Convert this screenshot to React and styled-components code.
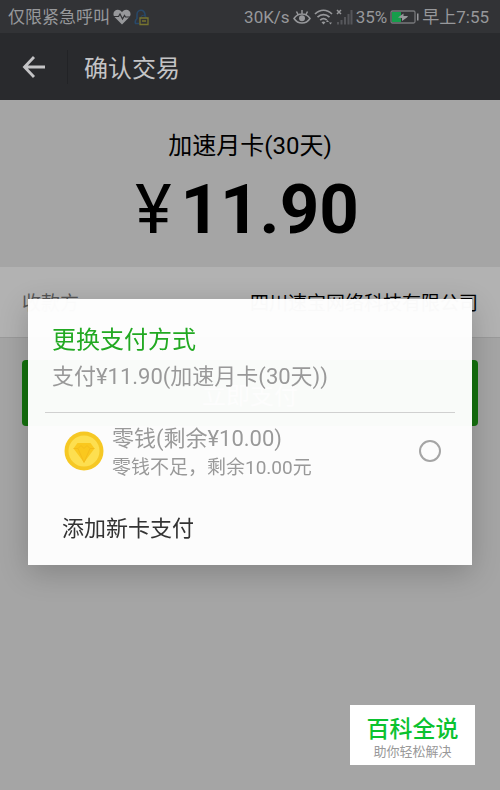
import React, { useState } from "react";
import styled, { createGlobalStyle } from "styled-components";

const GlobalStyle = createGlobalStyle`
    * {
        box-sizing: border-box;
    }
    body {
        margin: 0;
        background: #a5a5a5;
        color: #000;
        font-family: Roboto, "Noto Sans CJK SC", sans-serif;
    }
    h1, h2, p, dl, dt, dd {
        margin: 0;
        font-weight: 400;
    }
    button {
        border: 0;
        padding: 0;
        background: none;
        font-family: inherit;
        cursor: pointer;
    }
`;

// icons
const HeartIcon = () => (
    <svg width="18" height="16" viewBox="0 0 18 16">
        <path
            d="M9 15.500 2 8.500C-1.200 5 1 .8 4.800.8 6.700.8 8.200 1.800 9 3.300 9.800 1.800 11.300.8 13.200.8 17 .8 19.200 5 16 8.500Z"
            fill="#97989b"
        />
        <path
            d="M1 7.500h4.500L7 5l2.500 5L11.500 6.500l1 1.500H17"
            fill="none"
            stroke="#323336"
            strokeWidth="1.200"
        />
    </svg>
);

const PersonLockIcon = () => (
    <svg width="16" height="17" viewBox="0 0 16 17" fill="none">
        <path
            d="M5 14.500H1.500c-.6-1.500 0-3.500 1.500-5V6a4 4.500 0 0 1 8-.5v2"
            stroke="#28496a"
            strokeWidth="1.600"
        />
        <path d="M7 9V7.500a3 2.500 0 0 1 5 0V9" stroke="#28496a" />
        <path d="M6 9h8v6.500H6ZM8 12h4" stroke="#77742f" strokeWidth="1.300" />
    </svg>
);

const EyeIcon = () => (
    <svg width="18" height="16" viewBox="0 0 18 16" fill="none">
        <path
            d="M1 9.500c4-6 12-6 16 0-4 6-12 6-16 0ZM9 1v3.500M3.500 2.500 5 5.500M14.500 2.500 13 5.500"
            stroke="#97989b"
            strokeWidth="1.500"
        />
        <circle cx="9" cy="9.300" r="3" fill="#97989b" />
    </svg>
);

const WifiIcon = () => (
    <svg width="19" height="16" viewBox="0 0 19 16" fill="none">
        <path
            d="M1 5c5-5 12-5 17 0M3.500 8.200c3.500-3.500 8.500-3.500 12 0M6.200 11.200c2-2 4.600-2 6.600 0"
            stroke="#97989b"
            strokeWidth="1.700"
        />
        <path
            d="m9.500 15.500-2-2.300c1.200-1 2.800-1 4 0ZM12 13l1.500-2 1.500 2ZM15 13.500h3L16.500 15.500Z"
            fill="#97989b"
        />
    </svg>
);

const SignalIcon = () => (
    <svg width="17" height="16" viewBox="0 0 17 16">
        <path d="m1 1 4 4M5 1 1 5" stroke="#97989b" strokeWidth="1.500" />
        <path
            d="M2 13v2.500M5.500 11v4.500M9 8v7.500M12.500 5v10.500M15.500 1v14.500"
            stroke="#55565a"
            strokeWidth="2"
        />
    </svg>
);

const BatteryIcon = () => (
    <svg width="29" height="14" viewBox="0 0 29 14">
        <rect
            x="1"
            y="1"
            width="24"
            height="12"
            rx="1.500"
            fill="none"
            stroke="#77787b"
            strokeWidth="1.300"
        />
        <path d="M27 3.500h1.500v7H27Z" fill="#97989b" />
        <path d="M2 2h9v10H2Z" fill="#169d4b" />
        <path d="m8 7.500 5.500-4v2.500H18l-1 1.500-5 3.500V8Z" fill="#97989b" />
    </svg>
);

const BackIcon = () => (
    <svg width="24" height="24" viewBox="0 0 24 24" fill="none">
        <path
            d="M12 2 2.500 12 12 22M2.500 12H23"
            stroke="#c4c4c6"
            strokeWidth="2.800"
        />
    </svg>
);

const CoinIcon = () => (
    <svg width="40" height="40" viewBox="0 0 40 40">
        <circle cx="20" cy="20" r="19.500" fill="#f6c824" />
        <circle cx="20" cy="20" r="15.500" fill="#fddf50" />
        <path d="M13.500 12h13l4 5.500L20 31.500 9.500 17.500Z" fill="#fac81e" />
        <path
            d="M9.500 17.500h4.500l3-3 3 3 3-3 3 3h4.500M14 17.500l6 14 6-14"
            fill="none"
            stroke="#f3b91a"
            strokeWidth=".8"
        />
    </svg>
);

const App = () => {
    const [method, setMethod] = useState("");

    return (
        <>
            <GlobalStyle />
            <StatusBar>
                <StatusGroup>
                    <span>仅限紧急呼叫</span>
                    <HeartIcon />
                    <PersonLockIcon />
                </StatusGroup>
                <StatusGroup>
                    <span>30K/s</span>
                    <EyeIcon />
                    <WifiIcon />
                    <SignalIcon />
                    <span>35%</span>
                    <BatteryIcon />
                    <span>早上7:55</span>
                </StatusGroup>
            </StatusBar>
            <Header>
                <BackButton aria-label="返回">
                    <BackIcon />
                </BackButton>
                <HeaderTitle>确认交易</HeaderTitle>
            </Header>
            <main>
                <Summary>
                    <p>加速月卡(30天)</p>
                    <Amount>
                        <Currency>¥</Currency>11.90
                    </Amount>
                </Summary>
                <Payee>
                    <dt>收款方</dt>
                    <dd>四川速宝网络科技有限公司</dd>
                </Payee>
                <PayButton>立即支付</PayButton>
            </main>
            <Overlay>
                <Dialog role="dialog" aria-labelledby="dialog-title">
                    <DialogTitle id="dialog-title">更换支付方式</DialogTitle>
                    <DialogText>支付¥11.90(加速月卡(30天))</DialogText>
                    <Method>
                        <CoinIcon />
                        <MethodText>
                            <MethodName>零钱(剩余¥10.00)</MethodName>
                            <MethodHint>零钱不足，剩余10.00元</MethodHint>
                        </MethodText>
                        <Radio
                            type="radio"
                            name="method"
                            value="balance"
                            checked={method === "balance"}
                            onChange={e => setMethod(e.target.value)}
                        />
                    </Method>
                    <AddCard>添加新卡支付</AddCard>
                </Dialog>
            </Overlay>
            <Badge>
                <BadgeTitle>百科全说</BadgeTitle>
                <BadgeText>助你轻松解决</BadgeText>
            </Badge>
        </>
    );
};

const StatusBar = styled.div`
    display: flex;
    justify-content: space-between;
    align-items: center;
    height: 33px;
    padding: 1px 11px 0 8px;
    background: #323336;
    color: #97989b;
    font-size: 17px;
    line-height: 24px;
    white-space: nowrap;
`;

const StatusGroup = styled.div`
    display: flex;
    align-items: center;
    gap: 3px;
`;

const Header = styled.header`
    display: flex;
    align-items: center;
    height: 67px;
    background: #292a2d;
`;

const BackButton = styled.button`
    display: flex;
    justify-content: center;
    align-items: center;
    width: 68px;
    height: 34px;
    border-right: 1px solid #222326;
`;

const HeaderTitle = styled.h1`
    padding: 4px 0 0 16px;
    color: #c4c4c6;
    font-size: 24px;
    line-height: 32px;
`;

const Summary = styled.section`
    padding: 30px 0 14px;
    text-align: center;
    font-size: 24px;
    line-height: 32px;
`;

const Amount = styled.p`
    display: flex;
    justify-content: center;
    gap: 9px;
    padding: 4px 6px 0 0;
    font-size: 69px;
    font-weight: 700;
    line-height: 87px;
`;

const Currency = styled.span`
    font-weight: 400;
`;

const Payee = styled.dl`
    display: flex;
    justify-content: space-between;
    align-items: center;
    height: 71px;
    padding: 4px 22px 0;
    border-bottom: 1px solid #9a9a9a;
    background: #b2b2b2;
    font-size: 19px;
    line-height: 28px;
    dt {
        color: #555;
    }
`;

const PayButton = styled.button`
    display: block;
    width: calc(100% - 44px);
    height: 66px;
    margin: 22px;
    border-radius: 4px;
    background: #15710f;
    color: #b2b2b2;
    font-size: 24px;
`;

const Overlay = styled.div`
    position: fixed;
    inset: 0;
    padding: 299px 28px 0;
`;

const Dialog = styled.section`
    padding: 24px 17px 20px;
    background: rgba(254, 254, 254, 0.98);
    box-shadow: 0 8px 28px rgba(0, 0, 0, 0.2);
`;

const DialogTitle = styled.h2`
    padding-left: 7px;
    color: #22a922;
    font-size: 24px;
    line-height: 34px;
`;

const DialogText = styled.p`
    padding: 4px 7px 19px;
    border-bottom: 1px solid #d0d0d0;
    color: #999;
    font-size: 22px;
    line-height: 32px;
`;

const Method = styled.label`
    display: flex;
    align-items: center;
    gap: 8px;
    padding: 6px 14px 0 19px;
    color: #999;
`;

const MethodText = styled.span`
    flex: 1;
    padding-top: 5px;
`;

const MethodName = styled.span`
    display: block;
    font-size: 22px;
    line-height: 30px;
`;

const MethodHint = styled.span`
    display: block;
    font-size: 19px;
    line-height: 28px;
`;

const Radio = styled.input`
    appearance: none;
    width: 22px;
    height: 22px;
    margin: 0;
    border: 2px solid #a5a5a5;
    border-radius: 50%;
    &:checked {
        background: #22a922;
    }
`;

const AddCard = styled.button`
    display: block;
    margin-top: 31px;
    padding-left: 17px;
    color: #333;
    font-size: 22px;
    line-height: 32px;
`;

const Badge = styled.aside`
    position: fixed;
    right: 25px;
    bottom: 25px;
    width: 125px;
    height: 60px;
    padding-top: 10px;
    background: #fff;
    text-align: center;
`;

const BadgeTitle = styled.p`
    color: #0bc22f;
    font-size: 23px;
    font-weight: 500;
    line-height: 30px;
`;

const BadgeText = styled.p`
    color: #999;
    font-size: 13px;
    line-height: 14px;
`;

export default App;
